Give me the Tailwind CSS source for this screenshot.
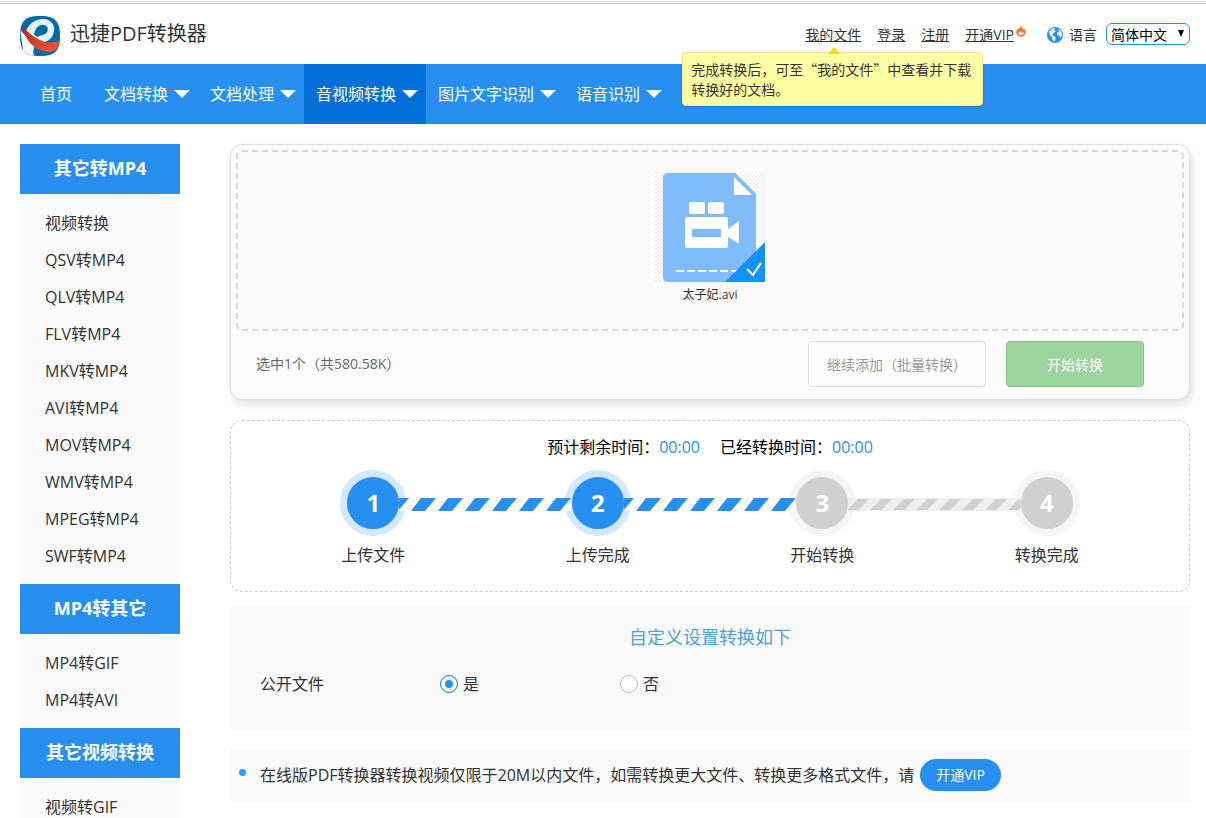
<!DOCTYPE html>
<html lang="zh-CN">
<head>
<meta charset="utf-8">
<meta name="viewport" content="width=device-width, initial-scale=1">
<title>迅捷PDF转换器</title>
<script src="https://cdn.jsdelivr.net/npm/@tailwindcss/browser@4"></script>
</head>
<body class="h-screen overflow-hidden bg-white font-['Open_Sans','Noto_Sans_CJK_SC',sans-serif] text-base text-[#333]">

<header class="flex h-16 items-center justify-between border-t-[3px] border-[#f2f2f2] pr-4 pl-5 shadow-[inset_0_1px_0_#ccc]">
  <a href="#" class="flex items-start gap-2.5 pt-[5px] text-xl leading-9">
    <svg class="size-10" viewBox="0 0 40 40" aria-hidden="true">
      <defs>
        <clipPath id="lg"><path d="M20 0C35 0 40 5 40 20S35 40 20 40 0 35 0 20 5 0 20 0Z"/></clipPath>
        <linearGradient id="red" x1="0" y1="0" x2="1" y2="1"><stop offset="0" stop-color="#b8291c"/><stop offset="1" stop-color="#ef5a3c"/></linearGradient>
      </defs>
      <g clip-path="url(#lg)">
        <rect width="40" height="40" fill="#0568a8"/>
        <path d="M6 15C9 7 16 3 23 3 31 3 35 9 34 15 33 22 28 26 23 26L14 22Z" fill="#e4f2fc"/>
        <path d="M14 19C15 12 19 8 24 9 29 10 29 16 25 18 22 20 19 19 18 21Z" fill="#0568a8"/>
        <path d="M0 14 15 29C13 33 13 37 14 40H4Z" fill="#f4f9fd"/>
        <path d="M2 10C8 17 16 23 25 26 31 27 36 26 40 24 39 31 36 35 30 36 17 36 5 26 2 10Z" fill="url(#red)"/>
      </g>
    </svg>
    <span>迅捷PDF转换器</span>
  </a>
  <div class="flex items-start pt-[3px] text-sm leading-6">
    <nav class="flex gap-4" aria-label="账户">
      <div class="relative">
        <a href="#" class="underline">我的文件</a>
        <div role="tooltip" class="absolute top-[29px] -left-[123px] z-10 w-[301px] rounded border border-[#e8e888] bg-[#ffffa3] px-2 py-1.5 font-['Noto_Sans_CJK_SC',sans-serif] text-sm leading-5 shadow-sm">
          <span class="absolute -top-1.5 left-[145px] border-x-[6px] border-b-[7px] border-x-transparent border-b-[#ffd800]"></span>
          完成转换后，可至“我的文件”中查看并下载<br>转换好的文档。
        </div>
      </div>
      <a href="#" class="underline">登录</a>
      <a href="#" class="underline">注册</a>
      <a href="#" class="flex"><span class="underline">开通VIP</span>
        <svg class="mt-0.5 ml-0.5 h-3 w-2.5" viewBox="0 0 10 12" aria-hidden="true"><path d="M4.600 0C5 2.500 7 2.500 7.500 4.500L8.600 3.500C9.400 5 10 6 9.800 7.500 9.600 10 7.500 11.700 5 11.700S0 9.500.2 7.200C.4 5 1.500 4.500 1.800 3L2.700 4C4 3 4.500 1.500 4.600 0Z" fill="#f9783c"/><path d="M5 6 6 8 7.500 7C8 8.800 7 10 5 10S2 8.800 2.500 7L4 8Z" fill="#fff"/></svg>
      </a>
    </nav>
    <label for="lang" class="ml-[21px] flex items-center gap-1.5">
      <svg class="size-4" viewBox="0 0 16 16" aria-hidden="true"><circle cx="8" cy="8" r="8" fill="#278ff0"/><path d="M2 4.500 5 1.500 8 1 7 3 9 4 6.500 6 5 8 7 9 9 10.500 8 13 7 15 5.500 12 4.500 9.500 2.500 7.500Z" fill="#fff"/><path d="M11 2 14 4 15 8 13.500 11 12.500 8.500 10.500 8 10 6 12 4.500Z" fill="#fff"/></svg>
      语言
    </label>
    <div class="relative ml-[9px]">
      <select id="lang" class="block h-[22px] w-[84px] appearance-none rounded-md border border-[#278ff0] bg-white pt-px pl-1 text-sm leading-5 text-black"><option>简体中文</option></select>
      <span class="pointer-events-none absolute top-[7px] right-1.5 border-x-[3px] border-t-[7px] border-x-transparent border-t-black"></span>
    </div>
  </div>
</header>

<nav class="flex h-[60px] items-stretch bg-[#278ff0] pl-5 leading-[60px] text-white" aria-label="主导航">
  <a href="#" class="px-5">首页</a>
  <a href="#" class="flex items-center gap-1.5 pr-2 pl-3">文档转换<span class="border-x-8 border-t-8 border-x-transparent border-t-white"></span></a>
  <a href="#" class="flex items-center gap-1.5 pr-2 pl-3">文档处理<span class="border-x-8 border-t-8 border-x-transparent border-t-white"></span></a>
  <a href="#" class="flex items-center gap-1.5 bg-[#046fd8] pr-2 pl-3">音视频转换<span class="border-x-8 border-t-8 border-x-transparent border-t-white"></span></a>
  <a href="#" class="flex items-center gap-1.5 pr-2 pl-3">图片文字识别<span class="border-x-8 border-t-8 border-x-transparent border-t-white"></span></a>
  <a href="#" class="flex items-center gap-1.5 pr-2 pl-3">语音识别<span class="border-x-8 border-t-8 border-x-transparent border-t-white"></span></a>
</nav>

<div class="flex items-start gap-[50px] pt-5 pr-4 pl-5">
  <aside class="w-40 shrink-0 bg-[#f9f9f9]">
    <h2 class="bg-[#278ff0] pb-0.5 text-center text-lg leading-[48px] font-bold text-white">其它转MP4</h2>
    <ul class="pt-[11px] pb-[9px] pl-[25px] leading-[37px]">
      <li><a href="#">视频转换</a></li>
      <li><a href="#">QSV转MP4</a></li>
      <li><a href="#">QLV转MP4</a></li>
      <li><a href="#">FLV转MP4</a></li>
      <li><a href="#">MKV转MP4</a></li>
      <li><a href="#">AVI转MP4</a></li>
      <li><a href="#">MOV转MP4</a></li>
      <li><a href="#">WMV转MP4</a></li>
      <li><a href="#">MPEG转MP4</a></li>
      <li><a href="#">SWF转MP4</a></li>
    </ul>
    <h2 class="bg-[#278ff0] pb-0.5 text-center text-lg leading-[48px] font-bold text-white">MP4转其它</h2>
    <ul class="pt-[11px] pb-[9px] pl-[25px] leading-[37px]">
      <li><a href="#">MP4转GIF</a></li>
      <li><a href="#">MP4转AVI</a></li>
    </ul>
    <h2 class="bg-[#278ff0] pb-0.5 text-center text-lg leading-[48px] font-bold text-white">其它视频转换</h2>
    <ul class="pt-[11px] pb-[9px] pl-[25px] leading-[37px]">
      <li><a href="#">视频转GIF</a></li>
    </ul>
  </aside>

  <main class="min-w-0 flex-1">
    <section class="rounded-xl border border-[#ddd] bg-[#fcfcfc] p-[5px] shadow-[2px_4px_8px_rgba(0,0,0,0.13)]">
      <div class="flex flex-col items-center rounded-md border-2 border-dashed border-[#d9d9d9] bg-[#fafafa] pt-5 pb-[25px]">
        <svg class="size-[110px]" viewBox="0 0 110 110" aria-hidden="true">
          <defs><pattern id="chk" width="4" height="4" patternUnits="userSpaceOnUse"><rect width="4" height="4" fill="#fff"/><path d="M0 0H2V2H0ZM2 2H4V4H2Z" fill="#f0f0f0"/></pattern></defs>
          <rect width="110" height="110" fill="url(#chk)"/>
          <path d="M13 1H80L101 22V110H13Q8 110 8 105V6Q8 1 13 1Z" fill="#7fbbf8"/>
          <path d="M72 1H80L101 22V24L97 23 79 4Z" fill="#7fbbf8"/>
          <path d="M79 5V23H97Z" fill="#fff"/>
          <rect x="34" y="30" width="16" height="12" rx="2" fill="#fff"/>
          <rect x="53" y="30" width="16" height="12" rx="2" fill="#fff"/>
          <path fill-rule="evenodd" d="M32 45H71Q73 45 73 47V57L84 49V72L73 65V74Q73 76 71 76H32Q30 76 30 74V47Q30 45 32 45ZM37 57V65H66V57Z" fill="#fff"/>
          <path d="M21 99H84" stroke="#fff" stroke-width="2" stroke-dasharray="8 3"/>
          <path d="M110 70V110H70Z" fill="#1492fb"/>
          <path d="M92 97 98 103 106 91" fill="none" stroke="#fff" stroke-width="2"/>
        </svg>
        <p class="pt-1 text-xs leading-[18px]">太子妃.avi</p>
      </div>
      <div class="flex items-center justify-between pt-2.5 pr-10 pb-[7px] pl-5">
        <p class="text-sm text-[#666]">选中1个（共580.58K）</p>
        <div class="flex gap-5 text-sm">
          <button type="button" class="h-[46px] w-[178px] rounded border border-[#ddd] bg-[#fdfdfd] pt-0.5 text-[#999]">继续添加（批量转换）</button>
          <button type="button" class="h-[46px] w-[138px] rounded border border-[#8bc28b] bg-[#9dd39d] pt-0.5 text-white">开始转换</button>
        </div>
      </div>
    </section>

    <section class="mt-5 rounded-xl border border-dashed border-[#ccc] px-[30px] pt-3.5 pb-6">
      <div class="flex justify-center gap-5 leading-6 text-black">
        <p>预计剩余时间：<span class="text-[#278ff0]">00:00</span></p>
        <p>已经转换时间：<span class="text-[#278ff0]">00:00</span></p>
      </div>
      <svg class="absolute size-0" aria-hidden="true">
        <defs>
          <pattern id="on" width="27" height="13" patternUnits="userSpaceOnUse"><rect width="27" height="13" fill="#fafafa"/><path d="M12 13H26L37 0H22ZM-15 13H-1L10 0H-5Z" fill="#278ff0"/></pattern>
          <pattern id="off" width="23" height="13" patternUnits="userSpaceOnUse"><rect width="23" height="13" fill="#efefef"/><path d="M22 12H33L44 1H33ZM-1 12H10L21 1H10Z" fill="#d0d0d0"/></pattern>
        </defs>
      </svg>
      <ol class="flex pt-[11px] text-center">
        <li class="relative flex-1">
          <span class="mx-auto block size-[66px] rounded-full border-[7px] border-[#d3e8fc] bg-[#278ff0] text-2xl leading-[52px] font-bold text-white">1</span>
          <svg class="absolute top-7 left-[calc(50%+26px)] z-10 h-[13px] w-[calc(100%-52px)]" aria-hidden="true"><rect width="100%" height="13" fill="url(#on)"/></svg>
          <span class="block pt-[7px] leading-6">上传文件</span>
        </li>
        <li class="relative flex-1">
          <span class="mx-auto block size-[66px] rounded-full border-[7px] border-[#d3e8fc] bg-[#278ff0] text-2xl leading-[52px] font-bold text-white">2</span>
          <svg class="absolute top-7 left-[calc(50%+26px)] z-10 h-[13px] w-[calc(100%-52px)]" aria-hidden="true"><rect width="100%" height="13" fill="url(#on)"/></svg>
          <span class="block pt-[7px] leading-6">上传完成</span>
        </li>
        <li class="relative flex-1">
          <span class="mx-auto block size-[66px] rounded-full border-[7px] border-[#f5f5f5] bg-[#d0d0d0] text-2xl leading-[52px] font-bold text-white">3</span>
          <svg class="absolute top-7 left-[calc(50%+26px)] z-10 h-[13px] w-[calc(100%-52px)]" aria-hidden="true"><rect width="100%" height="13" fill="url(#off)"/></svg>
          <span class="block pt-[7px] leading-6">开始转换</span>
        </li>
        <li class="relative flex-1">
          <span class="mx-auto block size-[66px] rounded-full border-[7px] border-[#f5f5f5] bg-[#d0d0d0] text-2xl leading-[52px] font-bold text-white">4</span>
          <span class="block pt-[7px] leading-6">转换完成</span>
        </li>
      </ol>
    </section>

    <section class="mt-[15px] bg-[#f9f9f9] px-[30px] pt-4 pb-[33px]">
      <h3 class="text-center text-lg leading-7 text-[#4aa3df]">自定义设置转换如下</h3>
      <div role="radiogroup" aria-labelledby="public-label" class="flex items-center pt-[21px] leading-6">
        <span id="public-label" class="w-[180px]">公开文件</span>
        <label class="flex w-[180px] items-center gap-[5px]"><input type="radio" name="public" checked class="size-[18px] appearance-none rounded-full border border-[#bbb] bg-white checked:border-[#278ff0] checked:bg-[#278ff0] checked:shadow-[inset_0_0_0_4px_#fff]">是</label>
        <label class="flex w-[180px] items-center gap-[5px]"><input type="radio" name="public" class="size-[18px] appearance-none rounded-full border border-[#bbb] bg-white checked:border-[#278ff0] checked:bg-[#278ff0] checked:shadow-[inset_0_0_0_4px_#fff]">否</label>
      </div>
    </section>

    <section class="mt-5 flex items-center bg-[#f9f9f9] py-2.5 pl-[9px]">
      <span class="mr-3.5 mb-1.5 size-[7px] rounded-full bg-[#27a0f5]"></span>
      <p>在线版PDF转换器转换视频仅限于20M以内文件，如需转换更大文件、转换更多格式文件，请</p>
      <a href="#" class="ml-1.5 rounded-full bg-[#278ff0] px-4 text-sm leading-8 text-white">开通VIP</a>
    </section>
  </main>
</div>
</body>
</html>
